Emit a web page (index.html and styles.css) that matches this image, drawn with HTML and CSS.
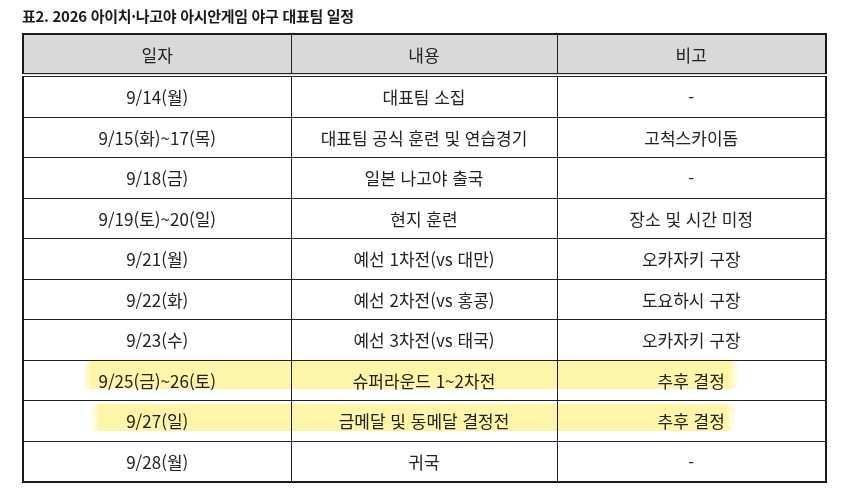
FILE: index.html
```html
<!DOCTYPE html>
<html lang="ko">
<head>
<meta charset="utf-8">
<link rel="stylesheet" href="styles.css">
</head>
<body>
<div class="wrap">
  <div class="title">표2. 2026 아이치·나고야 아시안게임 야구 대표팀 일정</div>
  <table class="sched">
    <colgroup><col class="c1"><col class="c2"><col class="c3"></colgroup>
    <thead>
      <tr><th>일자</th><th>내용</th><th>비고</th></tr>
    </thead>
    <tbody>
      <tr><td>9/14(월)</td><td>대표팀 소집</td><td>-</td></tr>
      <tr><td>9/15(화)~17(목)</td><td>대표팀 공식 훈련 및 연습경기</td><td>고척스카이돔</td></tr>
      <tr><td>9/18(금)</td><td>일본 나고야 출국</td><td>-</td></tr>
      <tr><td>9/19(토)~20(일)</td><td>현지 훈련</td><td>장소 및 시간 미정</td></tr>
      <tr><td>9/21(월)</td><td>예선 1차전(vs 대만)</td><td>오카자키 구장</td></tr>
      <tr><td>9/22(화)</td><td>예선 2차전(vs 홍콩)</td><td>도요하시 구장</td></tr>
      <tr><td>9/23(수)</td><td>예선 3차전(vs 태국)</td><td>오카자키 구장</td></tr>
      <tr><td>9/25(금)~26(토)</td><td>슈퍼라운드 1~2차전</td><td>추후 결정</td></tr>
      <tr><td>9/27(일)</td><td>금메달 및 동메달 결정전</td><td>추후 결정</td></tr>
      <tr><td>9/28(월)</td><td>귀국</td><td>-</td></tr>
    </tbody>
  </table>
  <div class="mark mark1"></div>
  <div class="mark mark2"></div>
</div>
</body>
</html>
```
FILE: styles.css
```css
html, body {
  margin: 0;
  padding: 0;
  background: #fff;
}
body {
  font-family: "Noto Sans CJK KR", "Noto Sans", sans-serif;
  color: #222;
}
.wrap {
  position: relative;
  padding: 6px 0 0 22px;
  width: 804px;
}
.title {
  font-size: 15px;
  font-weight: bold;
  line-height: 20px;
  height: 27px;
  letter-spacing: -0.3px;
  color: #1a1a1a;
}
.sched {
  border-collapse: collapse;
  width: 803px;
  border: 2px solid #1a1a1a;
  font-size: 17px;
  letter-spacing: 0;
  table-layout: fixed;
}
.c1 { width: 268px; }
.c2 { width: 266px; }
.c3 { width: 269px; }
.sched th {
  background: #d9d9d9;
  font-weight: normal;
  height: 38px;
  padding: 0;
  border-left: 1px solid #222;
  border-right: 1px solid #222;
  border-bottom: 4px double #222;
  text-align: center;
}
.sched td {
  height: 39.5px;
  padding: 0;
  border: 1px solid #222;
  text-align: center;
}
.mark {
  position: absolute;
  background: linear-gradient(90deg, rgba(250, 236, 80, 0) 0, rgba(250, 236, 80, 0.5) 10px, rgba(250, 236, 80, 0.5) calc(100% - 12px), rgba(250, 236, 80, 0) 100%);
  mix-blend-mode: multiply;
  border-radius: 8px 4px 10px 4px;
}
.mark1 {
  left: 82px;
  top: 361px;
  width: 658px;
  height: 28px;
}
.mark2 {
  left: 90px;
  top: 404px;
  width: 647px;
  height: 27px;
}
```
